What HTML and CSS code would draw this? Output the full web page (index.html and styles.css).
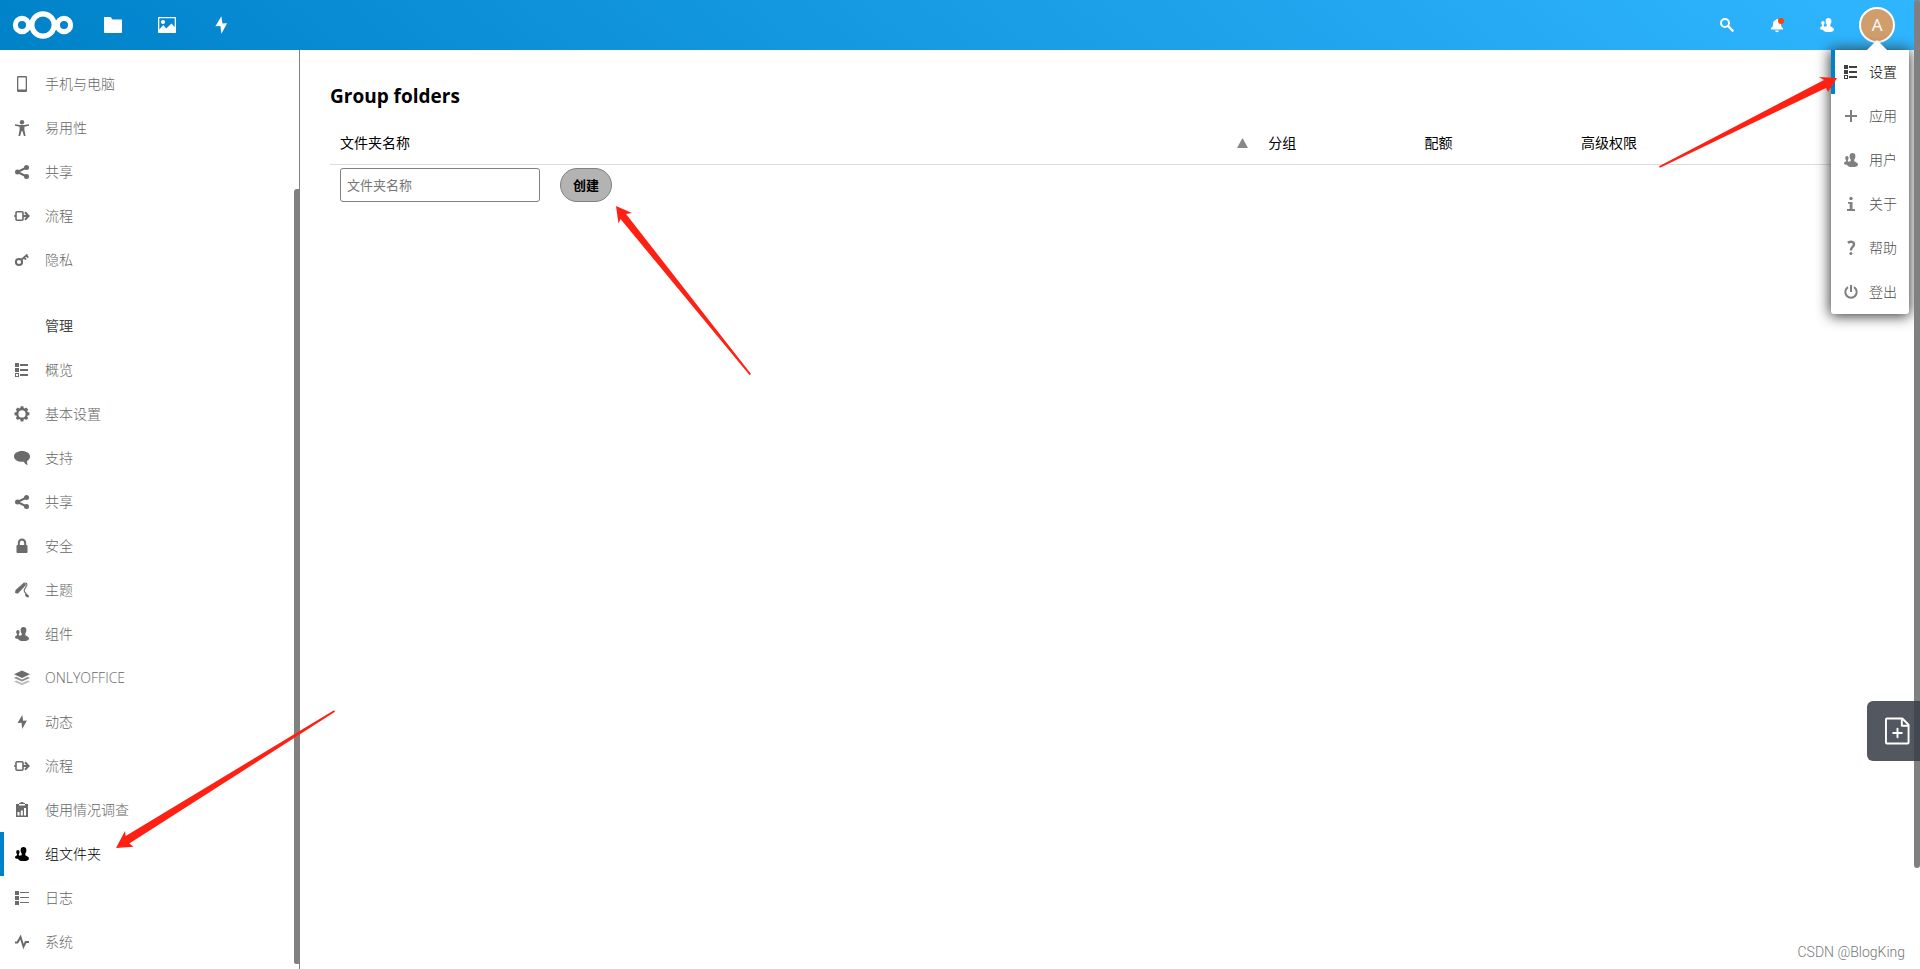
FILE: index.html
```html
<!DOCTYPE html>
<html lang="zh-CN">
<head>
<meta charset="utf-8">
<title>Group folders</title>
<link rel="stylesheet" href="styles.css">
</head>
<body>
<svg class="sprite" aria-hidden="true">
  <symbol id="phone" viewBox="0 0 16 16"><path fill-rule="evenodd" d="M4.200 0h7.600a1.200 1.200 0 0 1 1.200 1.200v13.600a1.200 1.200 0 0 1-1.200 1.200H4.200A1.200 1.200 0 0 1 3 14.800V1.200A1.200 1.200 0 0 1 4.200 0zM4.300 1.500v12h7.400v-12z"/></symbol>
  <symbol id="access" viewBox="0 0 16 16"><circle cx="8" cy="2.200" r="2.200"/><path d="M1 4.300l5 .8h4l5-.8v1.500l-4.600 1v3l1.200 6.200H9.900L8.400 11h-.8l-1.500 5H4.400l1.200-6.200v-3L1 5.800z"/></symbol>
  <symbol id="share" viewBox="0 0 16 16"><path d="M3.500 8L12.500 3.500M3.500 8l9 4.500" fill="none" stroke="currentColor" stroke-width="2"/><circle cx="3.500" cy="8" r="2.500"/><circle cx="12.500" cy="3.500" r="2.500"/><circle cx="12.500" cy="12.500" r="2.500"/></symbol>
  <symbol id="flow" viewBox="0 0 16 16"><path fill="none" stroke="currentColor" stroke-width="1.500" d="M0 8h2"/><rect x="2" y="3.800" width="7" height="8.400" rx="1" fill="none" stroke="currentColor" stroke-width="1.600"/><path fill="none" stroke="currentColor" stroke-width="2" d="M9 8h5.500M11 4.300L14.600 8 11 11.700"/></symbol>
  <symbol id="key" viewBox="0 0 16 16"><circle cx="5" cy="10" r="3.100" fill="none" stroke="currentColor" stroke-width="2"/><path d="M7 8l6.500-5.500M10 5.500l2 2.200M12.300 3.500l2 2.200" fill="none" stroke="currentColor" stroke-width="1.800"/></symbol>
  <symbol id="overview" viewBox="0 0 16 16"><path d="M1 1h4v4H1zM6 2h8v2H6zM1 6h4v4H1zM6 7h8v2H6zM6 12h8v2H6z"/><path fill-rule="evenodd" d="M1 11h4v4H1zM2 12v2h2v-2z"/></symbol>
  <symbol id="gear" viewBox="0 0 16 16"><path fill-rule="evenodd" d="M6.700.3h2.600l.4 1.800 1 .4 1.600-1 1.900 1.900-1 1.600.4 1 1.800.4v2.800l-1.800.4-.4 1 1 1.600-1.900 1.900-1.600-1-1 .4-.4 1.900H6.700l-.4-1.900-1-.4-1.600 1-1.900-1.900 1-1.600-.4-1L.5 9.200V6.400L2.400 6l.4-1-1-1.600 1.900-1.900 1.600 1 1-.4zM8 4.300a3.600 3.600 0 1 0 0 7.200 3.600 3.600 0 0 0 0-7.200z"/></symbol>
  <symbol id="chat" viewBox="0 0 16 16"><path d="M8 1c4.500 0 8 2.300 8 5.400 0 2-1.200 3.500-3 4.500.1 1.500.3 3 .5 4.300-1.800-.7-3-2-3.700-3.500L8 11.800c-4.500 0-8-2.300-8-5.400S3.500 1 8 1z"/></symbol>
  <symbol id="lock" viewBox="0 0 16 16"><path d="M4.800 8V5a3.200 3.600 0 0 1 6.400 0v3" fill="none" stroke="currentColor" stroke-width="2"/><rect x="2.500" y="7" width="11" height="8" rx="1"/></symbol>
  <symbol id="theme" viewBox="0 0 16 16"><path d="M9.700.8l2.500 2L4.500 11c-1 .8-2.500.6-3.500-.2L1.600 8z"/><path d="M9.800 1.200c2.500-.8 3.800.7 2.800 2.600L10.200 8c-.3 1.500.5 2.200 1.800 3.300" fill="none" stroke="currentColor" stroke-width="1.100"/><path d="M11.300 10.600l3.700 3.200-.4 1.700c-1.800.2-3.200-.8-3.500-2.500z"/></symbol>
  <symbol id="users" viewBox="0 0 16 16"><path d="M9.500 1c1.800 0 2.900 1.200 2.900 2.900 0 1.500-.4 2.700-1.100 3.500v1.900c.8.700 3.700 1.200 3.700 3.400 0 1.500-2.500 2.300-5.500 2.300-3.100 0-5.300-.8-5.400-2.300C2.300 12.600 1 12.200 1 11.400c0-1.300 1.300-1.700 2-2.100V8c-.5-.5-.8-1.100-.8-2 0-1.100.7-1.900 1.700-1.900S5.600 4.900 5.600 6c0 .9-.3 1.500-.8 2v1.200l.9.600c.8-.4 1.700-.5 2-.7V7.400C7 6.600 6.600 5.400 6.600 3.900 6.600 2.200 7.700 1 9.500 1z"/></symbol>
  <symbol id="layers" viewBox="0 0 16 16"><path d="M8 .5l8 3.700-8 3.700-8-3.700z"/><path opacity=".75" d="M0 8l2.300-1.200L8 9.400l5.700-2.600L16 8l-8 3.600z"/><path opacity=".45" d="M0 11.600l2.300-1L8 13l5.700-2.400 2.300 1-8 3.600z"/></symbol>
  <symbol id="bolt" viewBox="0 0 16 16"><path d="M8.300 1L3.500 9l4-.2L8.300 15l4.600-8.500-3.800.2z"/></symbol>
  <symbol id="survey" viewBox="0 0 16 16"><path fill-rule="evenodd" d="M2 2h3V1h1.500a1.500 1.500 0 0 1 3 0H11v1h3v13H2zM5 2v1.500h6V2zM3.500 10v3.500h2V10zM6.800 8.500v5h2v-5zM10 6v7.500h2V6z"/></symbol>
  <symbol id="log" viewBox="0 0 16 16"><path d="M1 1h4v4H1zM6 2h9v1H6zM1 6h4v4H1zM6 7h9v1H6zM1 11h4v4H1zM6 12h9v1H6z"/></symbol>
  <symbol id="pulse" viewBox="0 0 16 16"><path d="M1 8.500h2.500L6.500 3l3 9.500L11.700 8H15" fill="none" stroke="currentColor" stroke-width="2"/></symbol>
  <symbol id="plus" viewBox="0 0 16 16"><path d="M7 2h2v5h5v2H9v5H7V9H2V7h5z"/></symbol>
  <symbol id="info" viewBox="0 0 16 16"><circle cx="8" cy="2.500" r="1.700"/><path d="M5 6h4.500v7H12v2H4v-2h2.700V7.800H5z"/></symbol>
  <symbol id="help" viewBox="0 0 16 16"><path d="M4.800 2.600C8 1 11 1.800 11 4.400 11 7 7.900 7 7.900 10.400" fill="none" stroke="currentColor" stroke-width="2.400"/><circle cx="7.900" cy="13.600" r="1.500"/></symbol>
  <symbol id="power" viewBox="0 0 16 16"><path d="M5 3.200a5.700 5.700 0 1 0 6 0" fill="none" stroke="currentColor" stroke-width="2"/><path d="M7 1h2v7H7z"/></symbol>
  <symbol id="search" viewBox="0 0 16 16"><circle cx="6" cy="6" r="4" fill="none" stroke="currentColor" stroke-width="2"/><path d="M9 9l5.300 5.300" fill="none" stroke="currentColor" stroke-width="2.400"/></symbol>
  <symbol id="bell" viewBox="0 0 16 16"><path d="M8 2c.8 0 1.200.5 1.300 1 2 .7 2.700 2.200 2.700 4.200 0 1.800.3 2.800 2 3.800v1.500H2V11c1.700-1 2-2 2-3.800 0-2 .8-3.500 2.700-4.200.1-.5.500-1 1.300-1zM6 13.500h4c-.3 1.200-1 1.700-2 1.700s-1.700-.5-2-1.700z"/></symbol>
  <symbol id="folder" viewBox="0 0 20 20"><path d="M1.600 2h6l2 2.500h8.800c.3 0 .6.300.6.600V17c0 .6-.4 1-1 1H2c-.6 0-1-.4-1-1V2.600c0-.3.300-.6.600-.6z"/></symbol>
  <symbol id="image" viewBox="0 0 20 20"><path fill-rule="evenodd" d="M2 2h16c.6 0 1 .4 1 1v14c0 .6-.4 1-1 1H2c-.6 0-1-.4-1-1V3c0-.6.4-1 1-1zm.3 1.300v11.200l4-4.500 3 3.500 5.200-5 3.200 3.500V3.300z"/><circle cx="6" cy="7" r="2.100"/></symbol>
</svg>

<header class="topbar">
  <a class="logo" href="#" aria-label="Nextcloud">
    <svg viewBox="0 0 62 30"><g fill="none" stroke="#fff"><circle cx="31" cy="15" r="11.200" stroke-width="5.200"/><circle cx="10" cy="15" r="6.600" stroke-width="5.200"/><circle cx="52" cy="15" r="6.600" stroke-width="5.200"/></g></svg>
  </a>
  <nav class="apps" aria-label="Apps">
    <a href="#" aria-label="Files"><svg><use href="#folder"/></svg></a>
    <a href="#" aria-label="Photos"><svg><use href="#image"/></svg></a>
    <a href="#" aria-label="Activity"><svg><use href="#bolt"/></svg></a>
  </nav>
  <div class="tools">
    <button type="button" aria-label="Search"><svg class="icon"><use href="#search"/></svg></button>
    <button type="button" aria-label="Notifications" class="notify"><svg class="icon"><use href="#bell"/></svg><span class="dot"></span></button>
    <button type="button" aria-label="Contacts"><svg class="icon"><use href="#users"/></svg></button>
    <button type="button" aria-label="Account"><span class="avatar">A</span></button>
  </div>
  <nav class="menu" aria-label="Account menu">
    <a class="current" href="#"><svg class="icon"><use href="#overview"/></svg>设置</a>
    <a href="#"><svg class="icon"><use href="#plus"/></svg>应用</a>
    <a href="#"><svg class="icon"><use href="#users"/></svg>用户</a>
    <a href="#"><svg class="icon"><use href="#info"/></svg>关于</a>
    <a href="#"><svg class="icon"><use href="#help"/></svg>帮助</a>
    <a href="#"><svg class="icon"><use href="#power"/></svg>登出</a>
  </nav>
</header>

<div class="layout">
  <nav class="sidebar" aria-label="Settings">
    <a href="#"><svg class="icon"><use href="#phone"/></svg>手机与电脑</a>
    <a href="#"><svg class="icon"><use href="#access"/></svg>易用性</a>
    <a href="#"><svg class="icon"><use href="#share"/></svg>共享</a>
    <a href="#"><svg class="icon"><use href="#flow"/></svg>流程</a>
    <a href="#"><svg class="icon"><use href="#key"/></svg>隐私</a>
    <div class="caption">管理</div>
    <a href="#"><svg class="icon"><use href="#overview"/></svg>概览</a>
    <a href="#"><svg class="icon"><use href="#gear"/></svg>基本设置</a>
    <a href="#"><svg class="icon"><use href="#chat"/></svg>支持</a>
    <a href="#"><svg class="icon"><use href="#share"/></svg>共享</a>
    <a href="#"><svg class="icon"><use href="#lock"/></svg>安全</a>
    <a href="#"><svg class="icon"><use href="#theme"/></svg>主题</a>
    <a href="#"><svg class="icon"><use href="#users"/></svg>组件</a>
    <a href="#"><svg class="icon"><use href="#layers"/></svg>ONLYOFFICE</a>
    <a href="#"><svg class="icon"><use href="#bolt"/></svg>动态</a>
    <a href="#"><svg class="icon"><use href="#flow"/></svg>流程</a>
    <a href="#"><svg class="icon"><use href="#survey"/></svg>使用情况调查</a>
    <a class="current" href="#"><svg class="icon"><use href="#users"/></svg>组文件夹</a>
    <a href="#"><svg class="icon"><use href="#log"/></svg>日志</a>
    <a href="#"><svg class="icon"><use href="#pulse"/></svg>系统</a>
    <span class="thumb"></span>
  </nav>

  <main class="content">
    <h2>Group folders</h2>
    <table>
      <colgroup><col><col class="narrow"><col class="narrow"><col class="wide"></colgroup>
      <thead>
        <tr><th><div class="sort"><label for="folder-name">文件夹名称</label><svg viewBox="0 0 11 10"><path d="M5.500 0L11 10H0z"/></svg></div></th><th>分组</th><th>配额</th><th>高级权限</th></tr>
      </thead>
      <tbody>
        <tr><td colspan="4"><form class="create"><input id="folder-name" type="text" placeholder="文件夹名称"><button type="button">创建</button></form></td></tr>
      </tbody>
    </table>
  </main>
</div>

<span class="page-thumb"></span>
<button class="clip" type="button" aria-label="Add note">
  <svg viewBox="0 0 26 28"><g fill="none" stroke="#fff" stroke-width="2" stroke-linejoin="round" stroke-linecap="round"><path d="M2 1h16l6.500 6.500V26a1 1 0 0 1-1 1H2a1 1 0 0 1-1-1V2a1 1 0 0 1 1-1z"/><path d="M17.500 1.500V8.500H24M13 11.500v9M8.500 16h9"/></g></svg>
</button>
<div class="credit">CSDN @BlogKing</div>

<svg class="arrow to-settings" viewBox="0 0 180 92"><path d="M179 2L161 1l5 3L1 90.300l1 1.500L168 12l2 4z"/></svg>
<svg class="arrow to-create" viewBox="0 0 136 170"><path d="M1 1l16 7-6 1 125 160-1.500 1L5.500 14l-2 4.500z"/></svg>
<svg class="arrow to-folders" viewBox="0 0 220 138"><path d="M1 138l9-17 .7 5L219 .2l1 1.600L14.300 133.500l4.300 3.200z"/></svg>
</body>
</html>
```
FILE: styles.css
```css
* { box-sizing: border-box; }

body {
  margin: 0;
  min-height: 100vh;
  display: flex;
  flex-direction: column;
  position: relative;
  overflow: hidden;
  background: #fff;
  color: #000;
  font: 14px/20px "Open Sans", "Noto Sans CJK SC", sans-serif;
}

a { color: inherit; text-decoration: none; }
button { padding: 0; border: 0; background: none; color: inherit; font: inherit; }
svg { display: block; fill: currentColor; }
.sprite { position: absolute; width: 0; height: 0; }
.icon { width: 16px; height: 16px; flex: none; }

.topbar {
  position: relative;
  z-index: 2;
  height: 50px;
  display: flex;
  align-items: center;
  padding: 0 18px 0 12px;
  background: linear-gradient(40deg, #0082c9 0%, #30b6ff 100%);
  color: #fff;
}
.logo svg { width: 62px; height: 30px; }
.apps { display: flex; margin-left: 12px; }
.apps a { width: 54px; display: flex; justify-content: center; }
.apps svg { width: 20px; height: 20px; }
.tools { display: flex; margin-left: auto; }
.tools button { position: relative; width: 50px; height: 50px; display: flex; align-items: center; justify-content: center; }
.dot { position: absolute; top: 18px; right: 18px; width: 6px; height: 6px; border-radius: 50%; background: #ff4402; }
.avatar {
  width: 36px;
  height: 36px;
  border: 2px solid #fff;
  border-radius: 50%;
  background: #d09e6d;
  font-size: 17px;
  line-height: 32px;
}

.menu {
  position: absolute;
  top: 50px;
  right: 11px;
  border-radius: 0 0 3px 3px;
  background: #fff;
  box-shadow: 0 1px 14px 1px #333;
  color: #4d4d4d;
  font-weight: 300;
}
.menu::before {
  content: "";
  position: absolute;
  bottom: 100%;
  right: 22px;
  border: 10px solid transparent;
  border-top: 0;
  border-bottom-color: #fff;
}
.menu a { height: 44px; display: flex; align-items: center; gap: 10px; padding: 0 12px 0 8px; border-left: 4px solid transparent; }
.menu .icon { color: #808080; }
.menu .current { border-color: #0082c9; color: #000; }
.menu .current .icon { color: #404040; }

.sidebar {
  position: relative;
  width: 300px;
  flex: none;
  padding: 12px 0 5px;
  border-right: 1px solid #808080;
  color: #666;
  font-weight: 300;
}
.layout { flex: 1; display: flex; }
.sidebar a { height: 44px; display: flex; align-items: center; gap: 15px; padding-left: 10px; border-left: 4px solid transparent; }
.sidebar .icon { color: #6b6b6b; }
.sidebar .current { border-color: #0082c9; color: #000; }
.sidebar .current .icon { color: #000; }
.caption { height: 44px; margin-top: 22px; padding-left: 45px; line-height: 44px; color: #444; font-weight: 400; }
.thumb { position: absolute; top: 139px; right: -1px; bottom: 5px; width: 6px; border-radius: 3px 0 2px 2px; background: #808080; }

.content { flex: 1; padding: 30px 26px 0 30px; }
h2 { margin: 0; font-size: 19px; line-height: 32px; font-weight: 700; }

table { width: 100%; margin-top: 10px; border-collapse: collapse; table-layout: fixed; }
.narrow { width: 10%; }
.wide { width: 323px; }
th { height: 42px; padding: 0 10px; border-bottom: 1px solid #ddd; text-align: left; font-weight: 400; }
.sort { display: flex; align-items: center; justify-content: space-between; }
.sort svg { width: 11px; height: 10px; color: #888; }
td { padding: 3px 10px; }
.create { display: flex; gap: 20px; }
.create input,
.create button { height: 34px; border: 1px solid #808080; font: 13px/20px "Open Sans", "Noto Sans CJK SC", sans-serif; }
.create input { width: 200px; padding: 0 6px; border-radius: 3px; background: #fff; }
.create input::placeholder { color: #767676; }
.create button { width: 52px; border-radius: 17px; background: #b3b3b3; font-weight: 700; }

.page-thumb { position: absolute; z-index: 3; top: 0; right: 0; width: 6px; height: 868px; border-radius: 3px; background: #808080; }
.clip {
  position: absolute;
  z-index: 4;
  top: 701px;
  right: 0;
  width: 53px;
  height: 60px;
  padding-left: 18px;
  border-radius: 6px 0 0 6px;
  background: rgba(57, 62, 72, .87);
}
.clip svg { width: 25px; height: 28px; }
.credit { position: absolute; right: 15px; bottom: 7px; color: #777; font-family: Roboto, sans-serif; font-weight: 300; }

.arrow { position: absolute; z-index: 5; color: #ff2014; pointer-events: none; }
.to-settings { top: 76px; right: 82px; width: 180px; height: 92px; }
.to-create { top: 205px; left: 615px; width: 136px; height: 170px; }
.to-folders { top: 710px; left: 115px; width: 220px; height: 138px; }
```
